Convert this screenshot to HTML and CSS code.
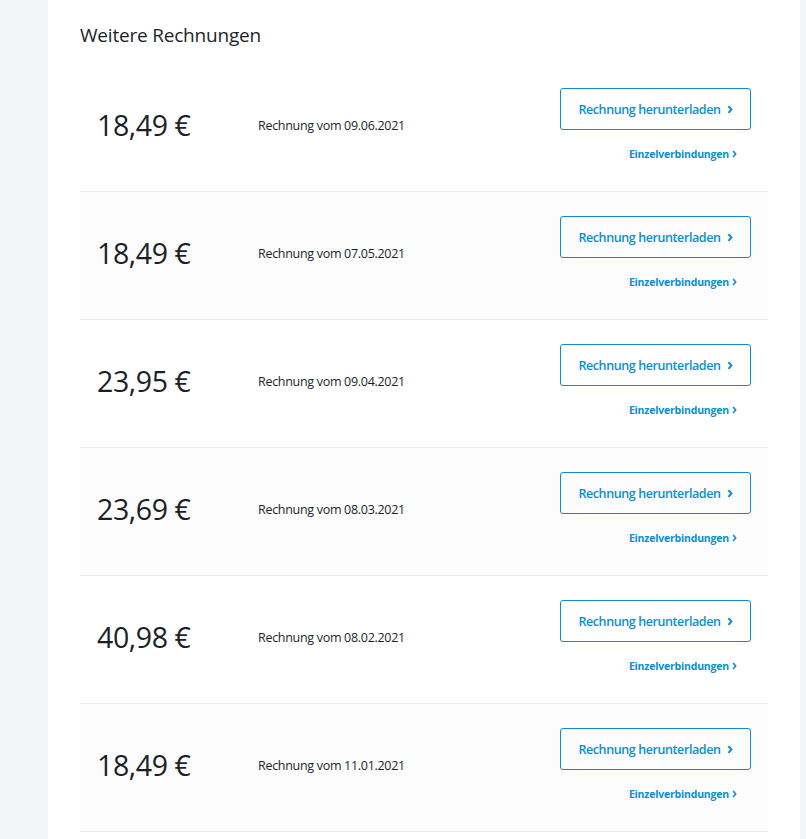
FILE: index.html
```html
<!DOCTYPE html>
<html lang="de">
<head>
<meta charset="utf-8">
<title>Weitere Rechnungen</title>
<link rel="stylesheet" href="styles.css">
</head>
<body>
<div class="page">
  <main class="card">
    <h2 class="title">Weitere Rechnungen</h2>
    <ul class="list">
      <li class="row">
        <div class="amount">18,49 €</div>
        <div class="date">Rechnung vom 09.06.2021</div>
        <div class="actions">
          <a class="btn" href="#">Rechnung herunterladen <svg class="chev" viewBox="0 0 6 10" width="6" height="9"><path d="M1.3 1.3 L4.5 5 L1.3 8.7" fill="none" stroke="currentColor" stroke-width="2.2"/></svg></a>
          <a class="link" href="#">Einzelverbindungen <svg class="chev-s" viewBox="0 0 6 10" width="5" height="8"><path d="M1.3 1.3 L4.5 5 L1.3 8.7" fill="none" stroke="currentColor" stroke-width="2"/></svg></a>
        </div>
      </li>
      <li class="row alt">
        <div class="amount">18,49 €</div>
        <div class="date">Rechnung vom 07.05.2021</div>
        <div class="actions">
          <a class="btn" href="#">Rechnung herunterladen <svg class="chev" viewBox="0 0 6 10" width="6" height="9"><path d="M1.3 1.3 L4.5 5 L1.3 8.7" fill="none" stroke="currentColor" stroke-width="2.2"/></svg></a>
          <a class="link" href="#">Einzelverbindungen <svg class="chev-s" viewBox="0 0 6 10" width="5" height="8"><path d="M1.3 1.3 L4.5 5 L1.3 8.7" fill="none" stroke="currentColor" stroke-width="2"/></svg></a>
        </div>
      </li>
      <li class="row">
        <div class="amount">23,95 €</div>
        <div class="date">Rechnung vom 09.04.2021</div>
        <div class="actions">
          <a class="btn" href="#">Rechnung herunterladen <svg class="chev" viewBox="0 0 6 10" width="6" height="9"><path d="M1.3 1.3 L4.5 5 L1.3 8.7" fill="none" stroke="currentColor" stroke-width="2.2"/></svg></a>
          <a class="link" href="#">Einzelverbindungen <svg class="chev-s" viewBox="0 0 6 10" width="5" height="8"><path d="M1.3 1.3 L4.5 5 L1.3 8.7" fill="none" stroke="currentColor" stroke-width="2"/></svg></a>
        </div>
      </li>
      <li class="row alt">
        <div class="amount">23,69 €</div>
        <div class="date">Rechnung vom 08.03.2021</div>
        <div class="actions">
          <a class="btn" href="#">Rechnung herunterladen <svg class="chev" viewBox="0 0 6 10" width="6" height="9"><path d="M1.3 1.3 L4.5 5 L1.3 8.7" fill="none" stroke="currentColor" stroke-width="2.2"/></svg></a>
          <a class="link" href="#">Einzelverbindungen <svg class="chev-s" viewBox="0 0 6 10" width="5" height="8"><path d="M1.3 1.3 L4.5 5 L1.3 8.7" fill="none" stroke="currentColor" stroke-width="2"/></svg></a>
        </div>
      </li>
      <li class="row">
        <div class="amount">40,98 €</div>
        <div class="date">Rechnung vom 08.02.2021</div>
        <div class="actions">
          <a class="btn" href="#">Rechnung herunterladen <svg class="chev" viewBox="0 0 6 10" width="6" height="9"><path d="M1.3 1.3 L4.5 5 L1.3 8.7" fill="none" stroke="currentColor" stroke-width="2.2"/></svg></a>
          <a class="link" href="#">Einzelverbindungen <svg class="chev-s" viewBox="0 0 6 10" width="5" height="8"><path d="M1.3 1.3 L4.5 5 L1.3 8.7" fill="none" stroke="currentColor" stroke-width="2"/></svg></a>
        </div>
      </li>
      <li class="row alt">
        <div class="amount">18,49 €</div>
        <div class="date">Rechnung vom 11.01.2021</div>
        <div class="actions">
          <a class="btn" href="#">Rechnung herunterladen <svg class="chev" viewBox="0 0 6 10" width="6" height="9"><path d="M1.3 1.3 L4.5 5 L1.3 8.7" fill="none" stroke="currentColor" stroke-width="2.2"/></svg></a>
          <a class="link" href="#">Einzelverbindungen <svg class="chev-s" viewBox="0 0 6 10" width="5" height="8"><path d="M1.3 1.3 L4.5 5 L1.3 8.7" fill="none" stroke="currentColor" stroke-width="2"/></svg></a>
        </div>
      </li>
    </ul>
  </main>
</div>
</body>
</html>
```

FILE: styles.css
```css
* { box-sizing: border-box; }
html, body { margin: 0; padding: 0; }
body {
  background: #f4f5f7;
  font-family: "Open Sans", "Noto Sans", "Liberation Sans", sans-serif;
  color: #1b1f2a;
  height: 839px;
  overflow: hidden;
}
.page {
  padding-left: 48px;
  padding-right: 6px;
}
.card {
  background: #ffffff;
  min-height: 839px;
  padding: 0 32px;
}
.title {
  margin: 0;
  padding-top: 22px;
  height: 64px;
  font-size: 19px;
  font-weight: 400;
  line-height: 26px;
  color: #1b1f2a;
  letter-spacing: -0.2px;
}
.list {
  list-style: none;
  margin: 0;
  padding: 0;
  width: 688px;
}
.row {
  display: flex;
  align-items: center;
  height: 128px;
  padding: 0 17px 5px;
  border-bottom: 1px solid #e9e9ea;
  background: #ffffff;
}
.row.alt { background: #fcfcfc; }
.amount {
  width: 161px;
  font-size: 28.5px;
  font-weight: 400;
  letter-spacing: -0.4px;
  color: #1b1f2a;
}
.date {
  flex: 1;
  font-size: 12.5px;
  letter-spacing: -0.3px;
  color: #1b1f2a;
}
.actions {
  width: 191px;
  display: flex;
  flex-direction: column;
  align-items: flex-end;
  align-self: flex-start;
  padding-top: 24px;
}
.btn {
  display: flex;
  align-items: center;
  justify-content: center;
  gap: 6px;
  width: 191px;
  height: 42px;
  border: 1px solid #0a8fcc;
  border-radius: 3px;
  color: #0a8fcc;
  font-size: 12.5px;
  font-weight: 600;
  letter-spacing: -0.4px;
  text-decoration: none;
}
.chev { display: block; margin-top: 1px; }
.link {
  display: flex;
  align-items: center;
  gap: 3px;
  margin-top: 17px;
  margin-right: 14px;
  color: #0a8fcc;
  font-size: 10.5px;
  font-weight: 700;
  letter-spacing: -0.2px;
  text-decoration: none;
  line-height: 14px;
}
.chev-s { display: block; }
```
